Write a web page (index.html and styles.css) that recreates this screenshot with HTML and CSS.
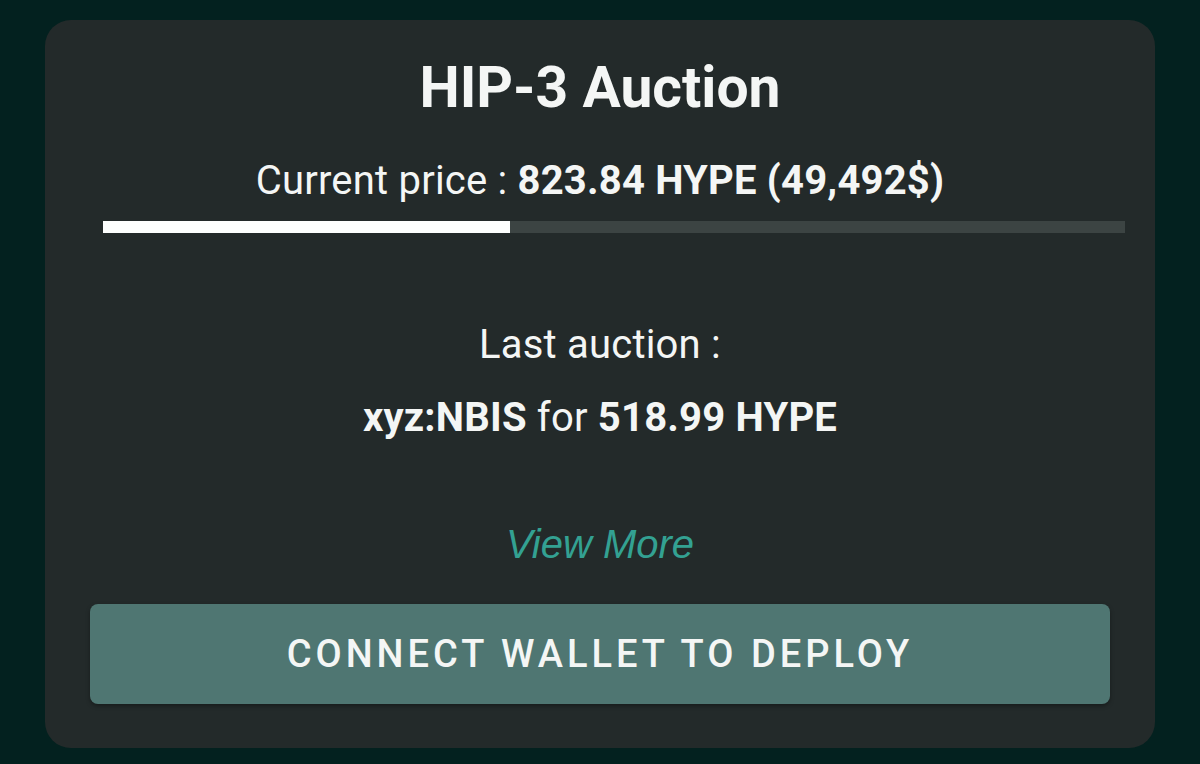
FILE: index.html
```html
<!DOCTYPE html>
<html lang="en">
<head>
  <meta charset="UTF-8" />
  <meta name="viewport" content="width=device-width, initial-scale=1.0" />
  <title>HIP-3 Auction</title>
  <link rel="stylesheet" href="styles.css">
</head>
<body>
  <section class="card">
    <h1>HIP-3 Auction</h1>
    <p class="price">Current price : <b>823.84 HYPE (49,492$)</b></p>
    <div class="progress">
      <div class="progress-fill" style="width: 39.8%"></div>
    </div>

    <div class="last">
      <p>Last auction :</p>
      <p><b>xyz:NBIS</b> for <b>518.99 HYPE</b></p>
    </div>

    <a href="#more" class="more">View More</a>

    <button type="button">Connect wallet to deploy</button>
  </section>
</body>
</html>
```

FILE: styles.css
```css
* {
  margin: 0;
  padding: 0;
  box-sizing: border-box;
  font-family: 'Roboto', sans-serif;
}

body {
  background: #03211f;
  color: #f4f6f5;
  padding: 20px 45px 16px 45px;
  height: 764px;
}

.card {
  background: #232a2a;
  border-radius: 26px;
  height: 728px;
  padding: 36px 45px 44px;
  display: flex;
  flex-direction: column;
  align-items: center;
}

.card h1 {
  font-size: 57px;
  font-weight: 700;
  line-height: 64px;
}

.price {
  font-size: 40px;
  margin-top: 41px;
  line-height: 40px;
  letter-spacing: 0.2px;
}

.price b {
  font-weight: 700;
}

.progress {
  align-self: stretch;
  margin: 20px -15px 0 13px;
  height: 12px;
  background: #3c4443;
}

.progress-fill {
  height: 100%;
  background: #fdfffe;
}

.last {
  margin-top: 92px;
  text-align: center;
  font-size: 40px;
  line-height: 40px;
  letter-spacing: 0.2px;
}

.last p + p {
  margin-top: 33px;
}

.more {
  margin-top: 84px;
  font-family: 'Liberation Sans', sans-serif;
  font-size: 40px;
  font-style: italic;
  color: #33a192;
  text-decoration: none;
  line-height: 44px;
}

button {
  margin-top: 38px;
  align-self: stretch;
  height: 100px;
  background: #4f7672;
  color: #f4f6f5;
  border: none;
  border-radius: 8px;
  font-size: 38px;
  font-weight: 500;
  letter-spacing: 4px;
  text-transform: uppercase;
  box-shadow: 0 2px 4px rgba(0, 0, 0, 0.35);
  cursor: pointer;
}
```
